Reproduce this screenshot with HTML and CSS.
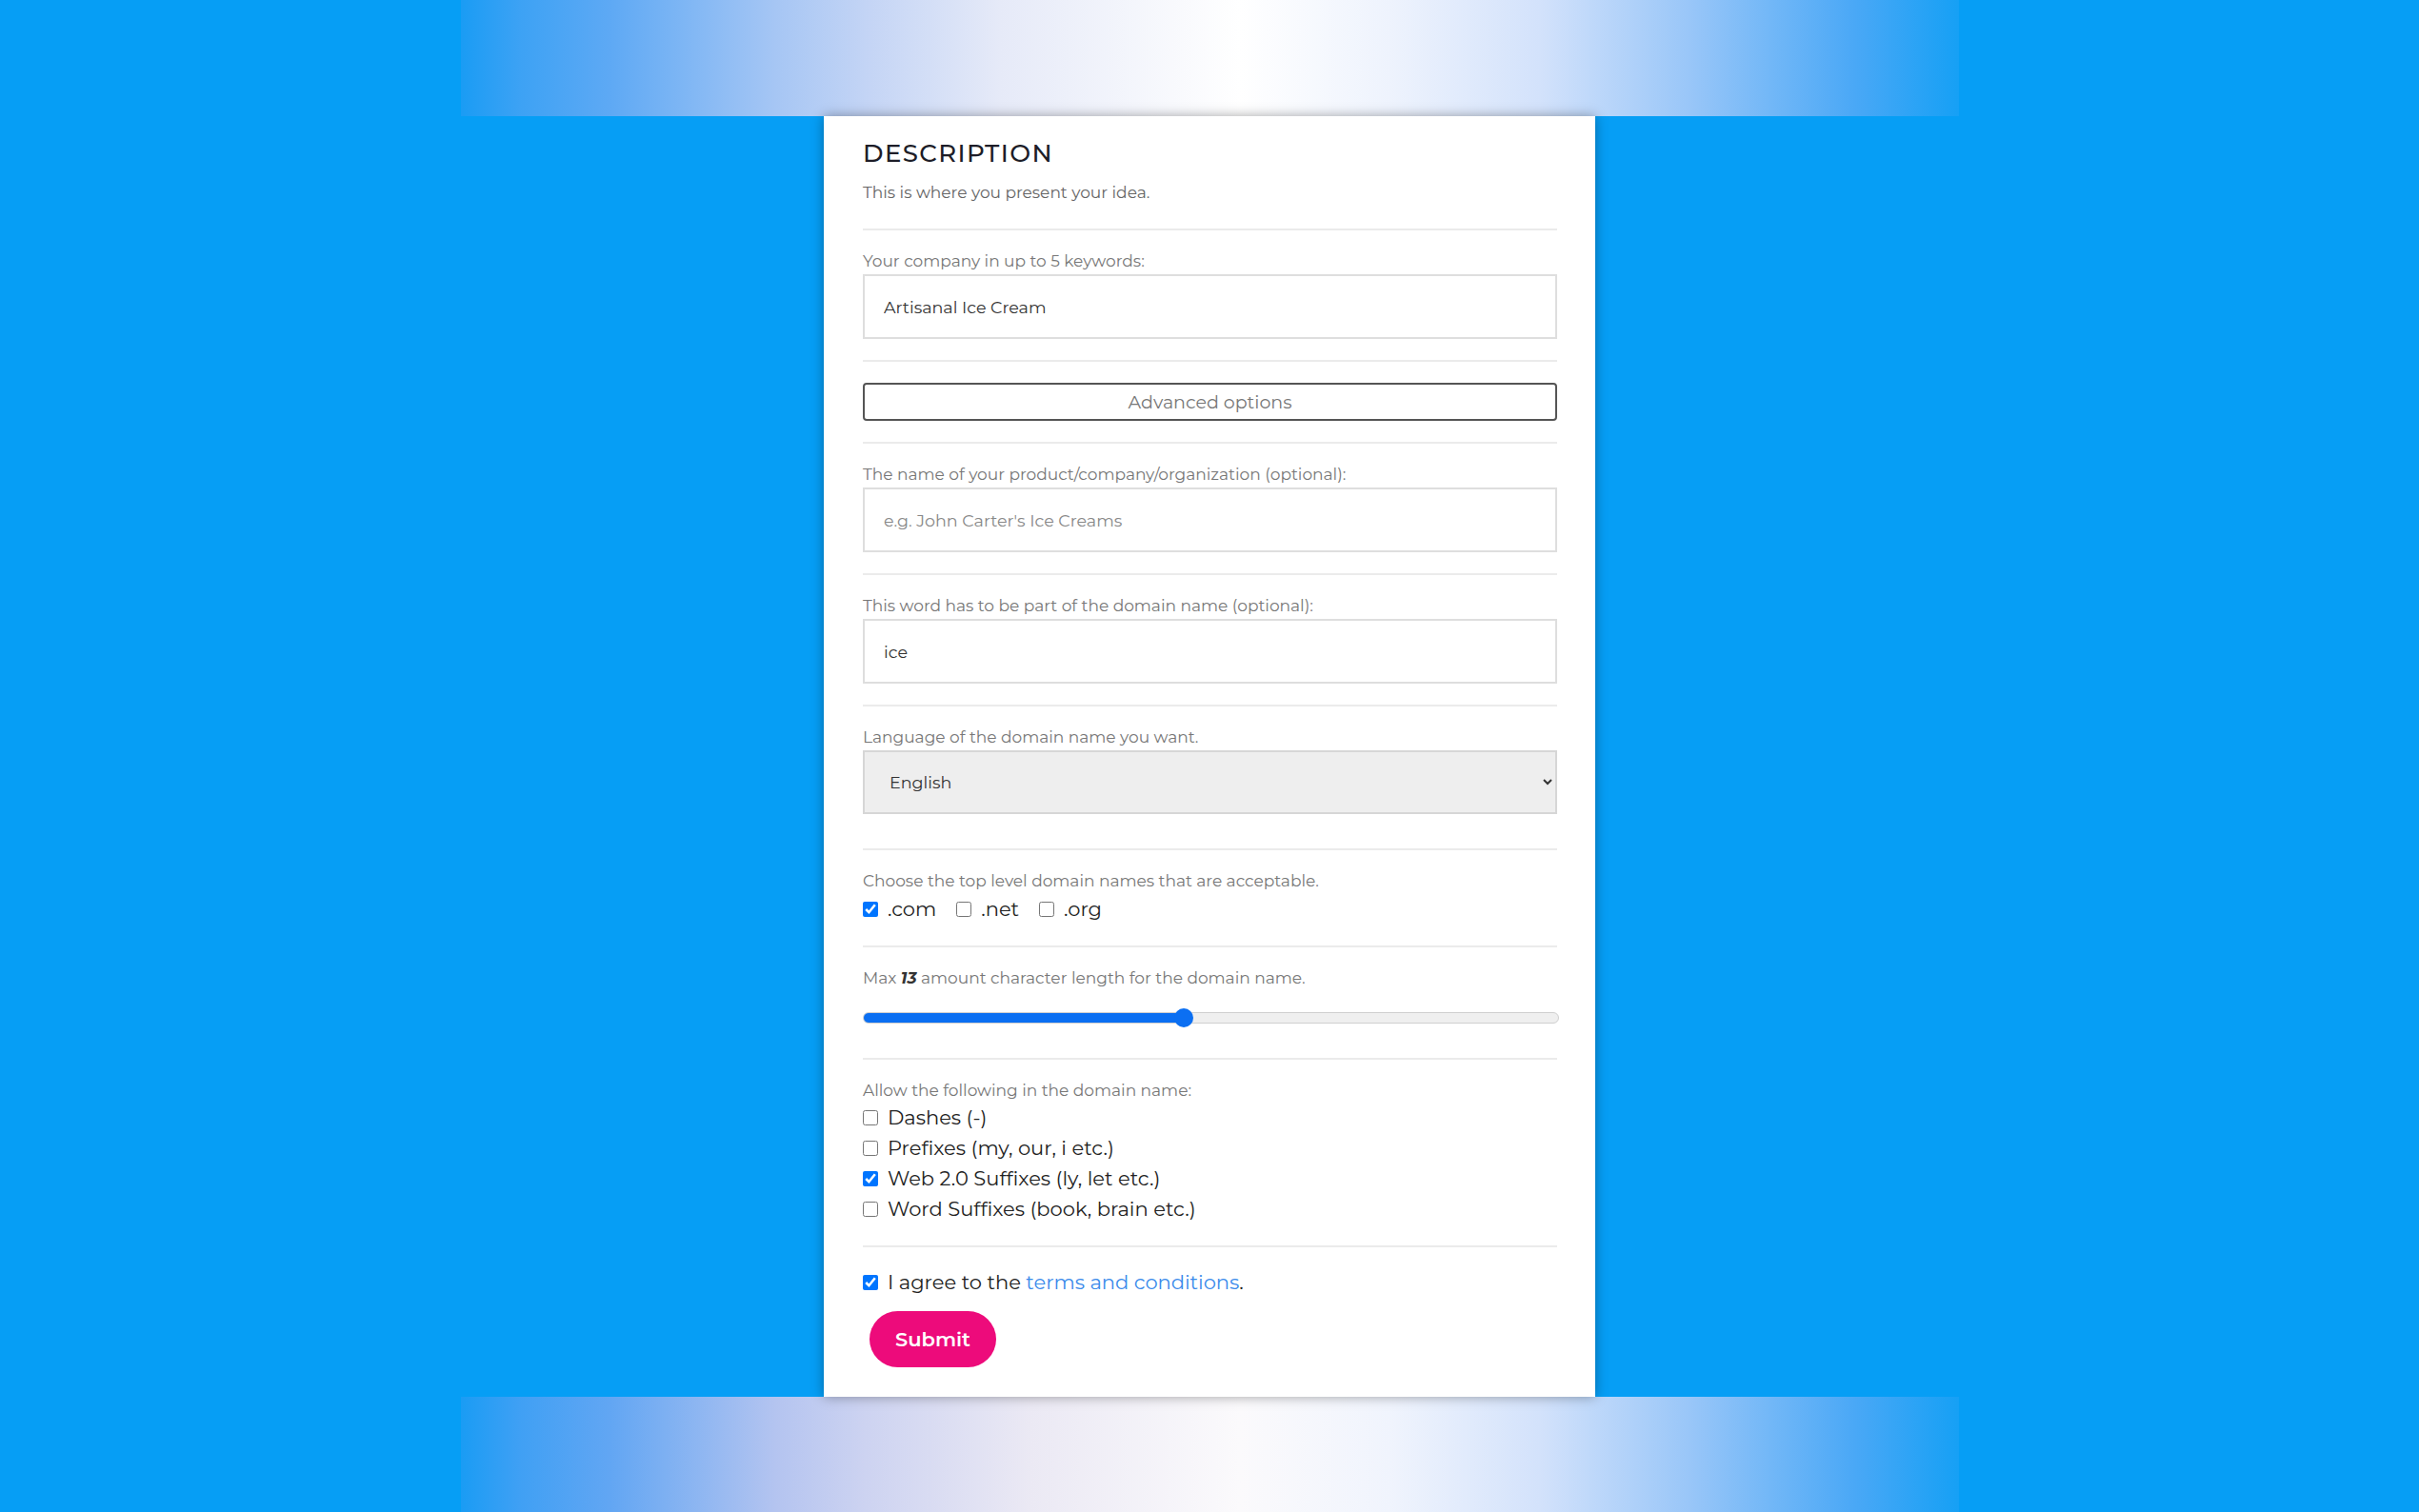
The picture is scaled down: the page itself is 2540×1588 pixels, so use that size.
FILE: index.html
```html
<!DOCTYPE html>
<html lang="en">
<head>
    <meta charset="UTF-8">
    <meta name="viewport" content="width=device-width, initial-scale=1.0">
    <title>Domain Name Generator</title>
    <link rel="stylesheet" href="styles.css">
</head>
<body>
    <div class="band"></div>

    <form class="card" onsubmit="return false;">
        <div class="intro">
            <h2>Description</h2>
            <p>This is where you present your idea.</p>
        </div>

        <div class="group">
            <label class="field-label" for="keywords">Your company in up to 5 keywords:</label>
            <input class="text-input" id="keywords" type="text" value="Artisanal Ice Cream">
        </div>

        <div class="group">
            <button type="button" class="advanced-btn">Advanced options</button>
        </div>

        <div class="group">
            <label class="field-label" for="company">The name of your product/company/organization (optional):</label>
            <input class="text-input" id="company" type="text" placeholder="e.g. John Carter's Ice Creams">
        </div>

        <div class="group">
            <label class="field-label" for="word">This word has to be part of the domain name (optional):</label>
            <input class="text-input" id="word" type="text" value="ice">
        </div>

        <div class="group">
            <label class="field-label" for="language">Language of the domain name you want.</label>
            <select class="select-input" id="language">
                <option>English</option>
                <option>German</option>
                <option>French</option>
                <option>Spanish</option>
            </select>
        </div>

        <div class="group">
            <span class="field-label">Choose the top level domain names that are acceptable.</span>
            <div class="tld-row">
                <label class="check"><input type="checkbox" checked><span>.com</span></label>
                <label class="check"><input type="checkbox"><span>.net</span></label>
                <label class="check"><input type="checkbox"><span>.org</span></label>
            </div>
        </div>

        <div class="group">
            <label class="field-label" for="length">Max <b><i>13</i></b> amount character length for the domain name.</label>
            <input class="range-input" id="length" type="range" min="0" max="100" value="46">
        </div>

        <div class="group">
            <span class="field-label tight">Allow the following in the domain name:</span>
            <label class="check block"><input type="checkbox"><span>Dashes (-)</span></label>
            <label class="check block"><input type="checkbox"><span>Prefixes (my, our, i etc.)</span></label>
            <label class="check block"><input type="checkbox" checked><span>Web 2.0 Suffixes (ly, let etc.)</span></label>
            <label class="check block"><input type="checkbox"><span>Word Suffixes (book, brain etc.)</span></label>
        </div>

        <div class="group last">
            <label class="check block"><input type="checkbox" checked><span>I agree to the <a href="#">terms and conditions</a>.</span></label>
            <button type="submit" class="submit-btn">Submit</button>
        </div>
    </form>

    <div class="band bottom"></div>
</body>
</html>
```

FILE: styles.css
```css
body {
    margin: 0;
    font-family: "Montserrat", "Inter", sans-serif;
    background-color: #069ef5;
}
.band {
    width: 1573px;
    height: 122px;
    margin: 0 auto;
    background: linear-gradient(90deg, #1a9cf4 0%, #3da2f4 4%, #5ea9f4 10%, #a6c6f4 21%, #c3d4f5 27%, #e6eaf8 36%, #ffffff 52%, #eef3fd 62%, #d3e2fb 72%, #99c6f8 82%, #4aa8f6 93%, #16a0f5 100%);
}
.band.bottom {
    background: linear-gradient(90deg, #1a9cf4 0%, #40a0f4 4%, #62a6f3 10%, #b4c4f0 21%, #cdd3f1 27%, #ebe9f4 38%, #fbfafc 52%, #f0f4fd 62%, #d3e2fb 72%, #99c6f8 82%, #4aa8f6 93%, #16a0f5 100%);
}
.card {
    width: 729px;
    margin: 0 auto;
    padding: 23px 40px 31px 41px;
    background: white;
    box-shadow: 0px 0px 12px rgba(0, 0, 0, 0.35);
    position: relative;
}
.intro {
    padding-bottom: 28px;
}
h2 {
    margin: 0;
    font-size: 26px;
    line-height: 32px;
    font-weight: 500;
    letter-spacing: 1.4px;
    text-transform: uppercase;
    color: #1d1d28;
}
.intro p {
    margin: 15px 0 0;
    font-size: 17px;
    line-height: 20px;
    color: #666;
}
.group {
    padding: 22px 0;
    border-top: 2px solid #ebebeb;
}
.field-label {
    display: block;
    font-size: 17px;
    line-height: 20px;
    color: #777;
    margin-bottom: 4px;
}
.field-label b {
    color: #333;
}
.field-label.tight {
    margin-bottom: 3px;
}
.text-input {
    display: block;
    box-sizing: border-box;
    width: 100%;
    height: 68px;
    padding: 0 20px;
    border: 2px solid #dedede;
    font-family: inherit;
    font-size: 17.5px;
    color: #333;
    outline: none;
}
.text-input::placeholder {
    color: #888;
}
.select-input {
    display: block;
    box-sizing: border-box;
    width: 100%;
    height: 67px;
    padding: 0 22px;
    margin-bottom: 14px;
    border: 2px solid #d6d6d6;
    background-color: #eeeeee;
    font-family: inherit;
    font-size: 17.5px;
    color: #333;
}
.advanced-btn {
    display: block;
    width: 100%;
    height: 40px;
    border: 2px solid #555;
    border-radius: 4px;
    background: white;
    font-family: inherit;
    font-size: 19px;
    color: #777;
    cursor: pointer;
}
.tld-row {
    display: flex;
    gap: 21px;
}
.check {
    display: inline-flex;
    align-items: center;
    gap: 10px;
    font-size: 21px;
    line-height: 32px;
    color: #222;
}
.check.block {
    display: flex;
}
.check input {
    width: 16px;
    height: 16px;
    margin: 0;
}
.check a {
    color: #3b8beb;
    text-decoration: none;
}
.range-input {
    display: block;
    -webkit-appearance: none;
    appearance: none;
    width: 100%;
    height: 10px;
    margin: 26px 0 14px;
    border: 1px solid #cfcfcf;
    border-radius: 6px;
    background: linear-gradient(90deg, #0b6ff2 45.5%, #efefef 45.5%);
    outline: none;
}
.range-input::-webkit-slider-thumb {
    -webkit-appearance: none;
    width: 20px;
    height: 20px;
    border-radius: 50%;
    background: #0b6ff2;
    cursor: pointer;
}
.group.last {
    padding: 21px 0 0;
}
.submit-btn {
    display: block;
    margin: 14px 0 0 7px;
    width: 133px;
    height: 59px;
    border: none;
    border-radius: 30px;
    background-color: #ed0b7b;
    color: white;
    font-family: inherit;
    font-size: 21px;
    font-weight: 600;
    cursor: pointer;
}
```
